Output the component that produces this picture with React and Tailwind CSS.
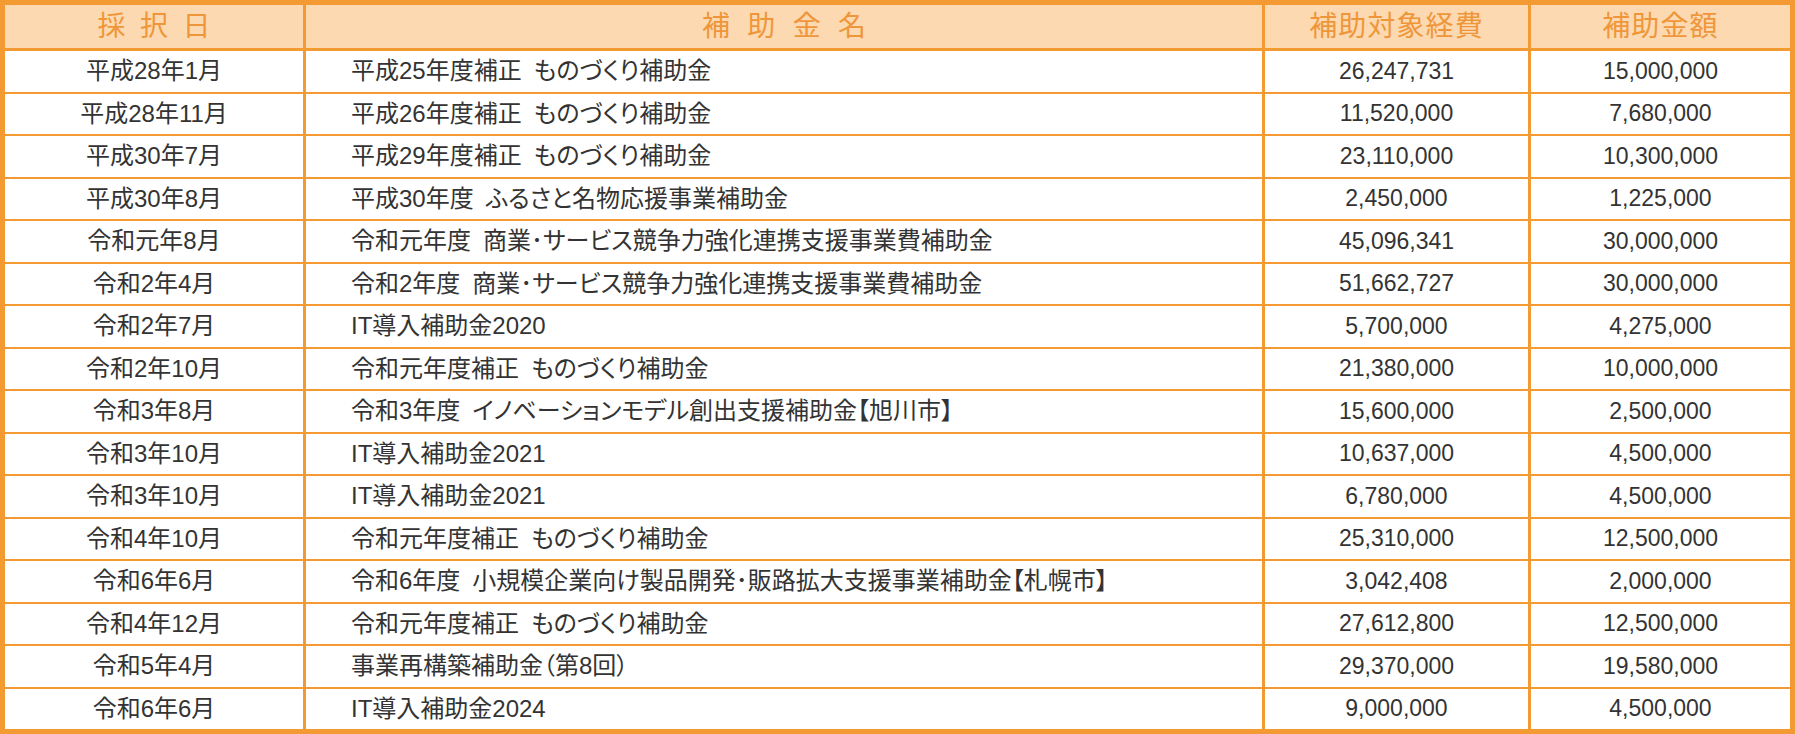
const rows = [
  ["平成28年1月", "平成25年度補正\u2002ものづくり補助金", "26,247,731", "15,000,000"],
  ["平成28年11月", "平成26年度補正\u2002ものづくり補助金", "11,520,000", "7,680,000"],
  ["平成30年7月", "平成29年度補正\u2002ものづくり補助金", "23,110,000", "10,300,000"],
  ["平成30年8月", "平成30年度\u2002ふるさと名物応援事業補助金", "2,450,000", "1,225,000"],
  ["令和元年8月", "令和元年度\u2002商業･サービス競争力強化連携支援事業費補助金", "45,096,341", "30,000,000"],
  ["令和2年4月", "令和2年度\u2002商業･サービス競争力強化連携支援事業費補助金", "51,662,727", "30,000,000"],
  ["令和2年7月", "IT導入補助金2020", "5,700,000", "4,275,000"],
  ["令和2年10月", "令和元年度補正\u2002ものづくり補助金", "21,380,000", "10,000,000"],
  ["令和3年8月", "令和3年度\u2002イノベーションモデル創出支援補助金【旭川市】", "15,600,000", "2,500,000"],
  ["令和3年10月", "IT導入補助金2021", "10,637,000", "4,500,000"],
  ["令和3年10月", "IT導入補助金2021", "6,780,000", "4,500,000"],
  ["令和4年10月", "令和元年度補正\u2002ものづくり補助金", "25,310,000", "12,500,000"],
  ["令和6年6月", "令和6年度\u2002小規模企業向け製品開発･販路拡大支援事業補助金【札幌市】", "3,042,408", "2,000,000"],
  ["令和4年12月", "令和元年度補正\u2002ものづくり補助金", "27,612,800", "12,500,000"],
  ["令和5年4月", "事業再構築補助金（第8回）", "29,370,000", "19,580,000"],
  ["令和6年6月", "IT導入補助金2024", "9,000,000", "4,500,000"],
];

// --- column template shared by header and body ---
const cols = "grid grid-cols-[298px_959px_266px_262px]";

export default function App() {
  return (
    <div className="w-[1795px] h-[734px] bg-white border-[5px] border-[#f39a33] flex flex-col font-['Liberation_Sans','Noto_Sans_CJK_JP',sans-serif]">
      {/* header */}
      <div className={`${cols} h-[46px] shrink-0 bg-[#fcd9b0] border-b-[3px] border-[#f39a33] text-[28px] text-[#ef963a] leading-none`}>
        <div className="flex items-center justify-center tracking-[0.12em] pl-[0.12em]">採 択 日</div>
        <div className="flex items-center justify-center border-l-[3px] border-[#f39a33] tracking-[0.17em] pl-[0.17em]">補 助 金 名</div>
        <div className="flex items-center justify-center border-l-[3px] border-[#f39a33] tracking-[0.04em]">補助対象経費</div>
        <div className="flex items-center justify-center border-l-[3px] border-[#f39a33] tracking-[0.04em]">補助金額</div>
      </div>

      {/* body */}
      {rows.map((r, i) => (
        <div
          key={i}
          className={`${cols} flex-1 min-h-0 text-[24px] text-[#333333] leading-none [font-feature-settings:'palt'] ${i > 0 ? "border-t-2 border-[#f39a33]" : ""}`}
        >
          <div className="flex items-center justify-center">{r[0]}</div>
          <div className="flex items-center pl-[45px] border-l-[3px] border-[#f39a33] whitespace-nowrap">{r[1]}</div>
          <div className="flex items-center justify-center border-l-[3px] border-[#f39a33] text-[23px]">{r[2]}</div>
          <div className="flex items-center justify-center border-l-[3px] border-[#f39a33] text-[23px]">{r[3]}</div>
        </div>
      ))}
    </div>
  );
}
